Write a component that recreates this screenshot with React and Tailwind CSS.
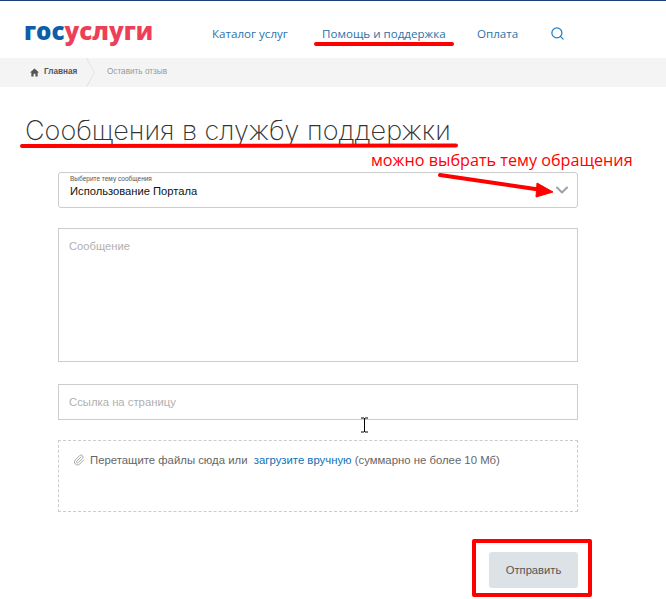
import React from 'react';
import { Search, ChevronDown, Paperclip } from 'lucide-react';

const navLinks = ['Каталог услуг', 'Помощь и поддержка', 'Оплата'];

// red marks drawn over the screenshot
const Annotations = () => (
  <>
    <svg className="absolute left-0 top-0 pointer-events-none" width="666" height="599" viewBox="0 0 666 599" fill="none">
      <path d="M316 44 L452 44" stroke="#ff0000" strokeWidth="4" strokeLinecap="round" />
      <path d="M22 146 L456 145.500" stroke="#ff0000" strokeWidth="4" strokeLinecap="round" />
      <path d="M440 175 L542 190" stroke="#ff0000" strokeWidth="4" strokeLinecap="round" />
      <path d="M537 183 L553 192 L536 197 Z" fill="#ff0000" stroke="#ff0000" strokeWidth="1" />
      {/* text cursor */}
      <path d="M361 418 H364 M365 418 H368 M361 432 H364 M365 432 H368 M364.500 418 V432" stroke="#000000" strokeWidth="1" />
    </svg>
    <div className="absolute left-[371px] top-[149px] text-[16.200px] leading-[22px] text-[#ff0000] font-['Open_Sans',sans-serif] whitespace-nowrap">можно выбрать тему обращения</div>
    <div className="absolute left-[472px] top-[539px] w-[120px] h-[58px] border-[4px] border-[#ff0000] rounded-[2px] pointer-events-none" />
  </>
);

export default function App() {
  return (
    <div className="relative w-[666px] h-[599px] overflow-hidden bg-white font-['Liberation_Sans',Arial,sans-serif]">
      <div className="h-[1px] bg-[#1c3d7a]" />
      <header className="h-[57px] flex items-center pl-[24px] pt-[8px]">
        <div className="w-[188px] -mt-[6px] text-[24.200px] leading-[30px] font-extrabold font-['Open_Sans',sans-serif]">
          <span className="text-[#0d5ea8]">гос</span><span className="text-[#ee3f58]">услуги</span>
        </div>
        <nav className="flex items-center text-[11.600px] text-[#2b72a8] font-['Open_Sans',sans-serif]">
          <a className="w-[110px]">{navLinks[0]}</a>
          <a className="w-[155px]">{navLinks[1]}</a>
          <a className="w-[73px]">{navLinks[2]}</a>
          <Search size={15} strokeWidth={2} className="text-[#1d7fc4]" />
        </nav>
      </header>
      <div className="relative h-[29px] bg-[#f4f4f4] flex items-center pl-[30px] text-[8.200px]">
        <svg className="mr-[5px] -mt-[1px]" width="9" height="9" viewBox="0 0 10 10">
          <path d="M5 0.500 L10 5 H8.500 V9.500 H6 V6.500 H4 V9.500 H1.500 V5 H0 Z" fill="#555555" />
        </svg>
        <span className="font-bold text-[#555555] w-[63px]">Главная</span>
        <span className="text-[#999999]">Оставить отзыв</span>
        <svg className="absolute left-[86px] top-0" width="10" height="29" viewBox="0 0 10 29" fill="none">
          <path d="M0.500 0 L8.500 14.500 L0.500 29" stroke="#e2e2e2" strokeWidth="1" />
        </svg>
      </div>
      <h1 className="ml-[25px] mt-[25px] text-[27px] leading-[38px] font-extralight text-[#333333] font-['Inter',sans-serif] whitespace-nowrap">Сообщения в службу поддержки</h1>
      <form className="w-[520px] ml-[58px] mt-[22px] flex flex-col">
        <div className="relative h-[36px] border border-[#cccccc] rounded-[3px] pl-[11px]">
          <div className="text-[6.500px] leading-[8px] text-[#555555] mt-[2px]">Выберите тему сообщения</div>
          <div className="text-[11.200px] leading-[14px] text-[#111111] mt-[1px]">Использование Портала</div>
          <ChevronDown size={20} strokeWidth={2.500} className="absolute right-[5px] top-[7px] text-[#9aa3ab]" />
        </div>
        <div className="mt-[20px] h-[134px] border border-[#cccccc] pl-[10px] pt-[10px] text-[11.200px] leading-[14px] text-[#b0b0b0]">Сообщение</div>
        <div className="mt-[22px] h-[36px] border border-[#cccccc] pl-[10px] flex items-center text-[11.300px] text-[#b0b0b0]">Ссылка на страницу</div>
        <div className="mt-[20px] h-[72px] border border-dashed border-[#cccccc] pl-[14px] pt-[12px] flex items-start text-[11.350px] leading-[14px] text-[#666666]">
          <Paperclip size={12} className="text-[#aaaaaa] mr-[5px] mt-[1px]" />
          <span>Перетащите файлы сюда или&nbsp; <a className="text-[#0b72b8]">загрузите вручную</a> (суммарно не более 10 Мб)</span>
        </div>
        <div className="mt-[40px] flex justify-end">
          <button type="button" className="w-[89px] h-[36px] bg-[#dce2e5] rounded-[3px] text-[11.200px] text-[#555555]">Отправить</button>
        </div>
      </form>
      <Annotations />
    </div>
  );
}
